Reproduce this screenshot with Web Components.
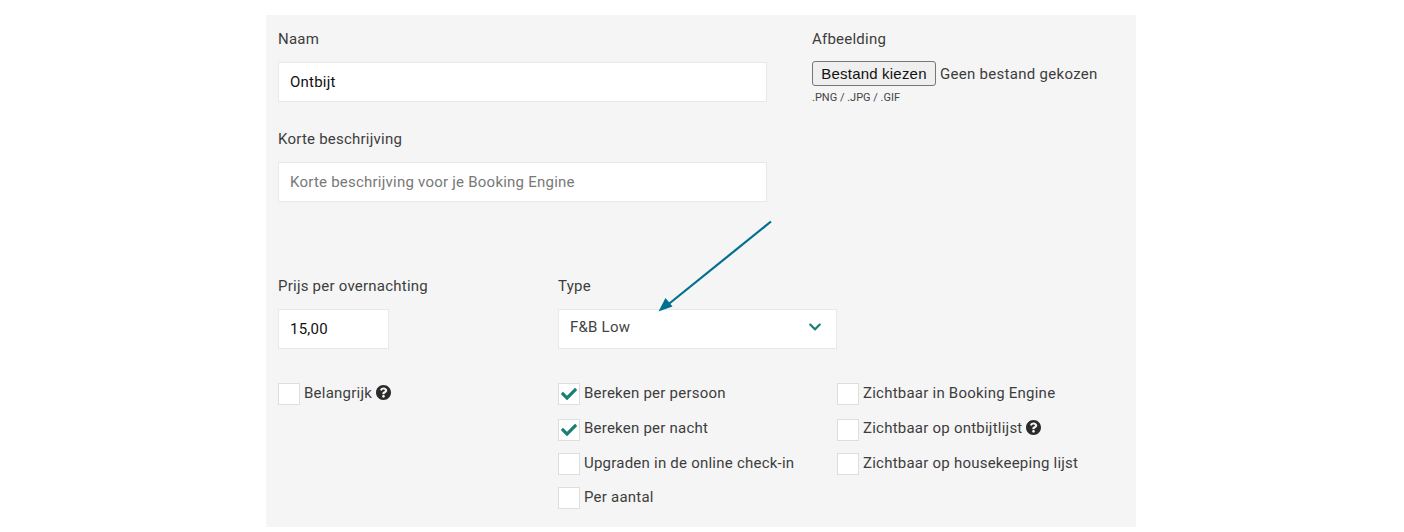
<!DOCTYPE html>
<html lang="nl">
<head>
<meta charset="utf-8">
<title>Ontbijt</title>
<style>
  html, body { margin: 0; background: #fff; }
  body { height: 532px; overflow: hidden; font-family: Roboto, "Liberation Sans", sans-serif; color: #3d3d3d; }
</style>
</head>
<body>
<template id="panel-tpl">
  <style>
    :host { display: block; position: relative; width: 870px; height: 512px; margin: 15px 0 0 266px; background: #f5f5f5; box-sizing: border-box; padding: 14px 12px 0; }
    .top { display: grid; grid-template-columns: 489px 1fr; column-gap: 45px; }
    .left { display: flex; flex-direction: column; gap: 27.500px; }
    .mid { display: grid; grid-template-columns: 280px 279px; margin-top: 74.500px; }
    .checks { display: grid; grid-template-columns: 280px 279px 1fr; margin-top: 34.800px; }
    .col { display: flex; flex-direction: column; gap: 12.700px; }
    svg.arrow { position: absolute; left: 385px; top: 200px; }
  </style>
  <div class="top">
    <div class="left">
      <x-field label="Naam" value="Ontbijt"></x-field>
      <x-field label="Korte beschrijving" placeholder="Korte beschrijving voor je Booking Engine"></x-field>
    </div>
    <x-upload></x-upload>
  </div>
  <div class="mid">
    <x-field label="Prijs per overnachting" value="15,00" width="111"></x-field>
    <x-field label="Type" value="F&amp;B Low" select></x-field>
  </div>
  <div class="checks">
    <div class="col">
      <x-check>Belangrijk <x-help></x-help></x-check>
    </div>
    <div class="col">
      <x-check checked>Bereken per persoon</x-check>
      <x-check checked style="--box-drop:1px">Bereken per nacht</x-check>
      <x-check>Upgraden in de online check-in</x-check>
      <x-check>Per aantal</x-check>
    </div>
    <div class="col">
      <x-check>Zichtbaar in Booking Engine</x-check>
      <x-check style="--box-drop:1px">Zichtbaar op ontbijtlijst <x-help></x-help></x-check>
      <x-check>Zichtbaar op housekeeping lijst</x-check>
    </div>
  </div>
  <svg class="arrow" width="130" height="105" viewBox="0 0 130 105" aria-hidden="true">
    <path d="M120 6.500 L14 92" stroke="#00708f" stroke-width="2.200" fill="none"/>
    <path d="M7.500 96.500 L14.500 83 L21.500 91.500 Z" fill="#00708f"/>
  </svg>
</template>

<template id="field-tpl">
  <style>
    :host { display: block; }
    label { display: block; font-size: 15px; line-height: 20px; letter-spacing: .23px; color: #3d3d3d; margin-bottom: 13px; }
    .box { box-sizing: border-box; height: 39.500px; background: #fff; border: 1px solid #e8e8e8; padding: 0 11px; display: flex; align-items: center; justify-content: space-between; font-size: 15px; letter-spacing: .23px; color: #111; }
    .box.empty { color: #787878; }
    .box.select { color: #444; padding-bottom: 4px; }
    svg { display: none; margin-right: 3px; }
    .select svg { display: block; }
  </style>
  <label></label>
  <div class="box"><span class="val"></span>
    <svg width="14" height="14" viewBox="0 0 448 512"><path fill="#1d7f74" d="M207.029 381.476L12.686 187.132c-9.373-9.373-9.373-24.569 0-33.941l22.667-22.667c9.357-9.357 24.522-9.375 33.901-.04L224 284.505l154.745-154.021c9.379-9.335 24.544-9.317 33.901.04l22.667 22.667c9.373 9.373 9.373 24.569 0 33.941L240.971 381.476c-9.373 9.372-24.569 9.372-33.942 0z"/></svg>
  </div>
</template>

<template id="upload-tpl">
  <style>
    :host { display: block; }
    label { display: block; font-size: 15px; line-height: 20px; letter-spacing: .23px; margin-bottom: 12px; }
    .row { display: flex; align-items: center; gap: 4px; height: 25px; font-size: 15px; letter-spacing: .29px; }
    .btn { box-sizing: border-box; width: 124px; height: 25px; padding: 0; border: 1px solid #767676; border-radius: 3px; background: #efefef; font: 15px "Liberation Sans", Arial, sans-serif; color: #111; letter-spacing: .2px; }
    small { display: block; margin-top: 5px; font-size: 11px; line-height: 14px; color: #444; }
  </style>
  <label>Afbeelding</label>
  <div class="row"><button class="btn" type="button">Bestand kiezen</button><span>Geen bestand gekozen</span></div>
  <small>.PNG / .JPG / .GIF</small>
</template>

<template id="check-tpl">
  <style>
    :host { display: flex; align-items: flex-start; gap: 4px; height: 22px; font-size: 15px; line-height: 20px; letter-spacing: .23px; color: #3d3d3d; white-space: nowrap; }
    .box { box-sizing: border-box; flex: none; width: 22px; height: 22px; margin-top: var(--box-drop, 0); background: #fff; border: 1px solid #dedede; display: flex; align-items: center; justify-content: center; }
    svg { display: none; }
    :host([checked]) svg { display: block; }
  </style>
  <span class="box"><svg width="16" height="16" viewBox="0 0 512 512"><path fill="#1d7f74" d="M173.898 439.404l-166.4-166.4c-9.997-9.997-9.997-26.206 0-36.204l36.203-36.204c9.997-9.998 26.207-9.998 36.204 0L192 312.69 432.095 72.596c9.997-9.997 26.207-9.997 36.204 0l36.203 36.204c9.997 9.997 9.997 26.206 0 36.204l-294.4 294.401c-9.998 9.997-26.207 9.997-36.204-.001z"/></svg></span>
  <span><slot></slot></span>
</template>

<template id="help-tpl">
  <style>
    :host { display: inline-block; width: 15px; height: 15px; vertical-align: -2px; }
    svg { display: block; }
  </style>
  <svg width="15" height="15" viewBox="8 8 496 496" aria-hidden="true">
    <path fill="#2b2b2b" d="M504 256c0 136.997-111.043 248-248 248S8 392.997 8 256C8 119.083 119.043 8 256 8s248 111.083 248 248zM262.655 90c-54.497 0-89.255 22.957-116.549 63.758-3.536 5.286-2.353 12.415 2.715 16.258l34.699 26.31c5.205 3.947 12.621 3.008 16.665-2.122 17.864-22.658 30.113-35.797 57.303-35.797 20.429 0 45.698 13.148 45.698 32.958 0 14.976-12.363 22.667-32.534 33.976C247.128 238.528 216 254.941 216 296v4c0 6.627 5.373 12 12 12h56c6.627 0 12-5.373 12-12v-1.333c0-28.462 83.186-29.647 83.186-106.667 0-58.002-60.165-102-116.531-102zM256 338c-25.365 0-46 20.635-46 46 0 25.364 20.635 46 46 46s46-20.636 46-46c0-25.365-20.635-46-46-46z"/>
  </svg>
</template>

<x-panel></x-panel>

<script>
function fromTemplate(el, id) {
  const root = el.attachShadow({ mode: "open" });
  root.appendChild(document.getElementById(id).content.cloneNode(true));
  return root;
}

class XField extends HTMLElement {
  constructor() {
    super();
    this.root = fromTemplate(this, "field-tpl");
  }
  connectedCallback() {
    const box = this.root.querySelector(".box");
    const val = this.root.querySelector(".val");
    this.root.querySelector("label").textContent = this.getAttribute("label");
    val.textContent = this.getAttribute("value") || this.getAttribute("placeholder") || "";
    if (!this.hasAttribute("value")) box.classList.add("empty");
    if (this.hasAttribute("select")) box.classList.add("select");
    if (this.hasAttribute("width")) box.style.width = this.getAttribute("width") + "px";
  }
}

class XPanel extends HTMLElement {
  constructor() { super(); fromTemplate(this, "panel-tpl"); }
}
class XUpload extends HTMLElement {
  constructor() { super(); fromTemplate(this, "upload-tpl"); }
}
class XCheck extends HTMLElement {
  constructor() { super(); fromTemplate(this, "check-tpl"); }
}
class XHelp extends HTMLElement {
  constructor() { super(); fromTemplate(this, "help-tpl"); }
}

customElements.define("x-field", XField);
customElements.define("x-upload", XUpload);
customElements.define("x-check", XCheck);
customElements.define("x-help", XHelp);
customElements.define("x-panel", XPanel);
</script>
</body>
</html>
